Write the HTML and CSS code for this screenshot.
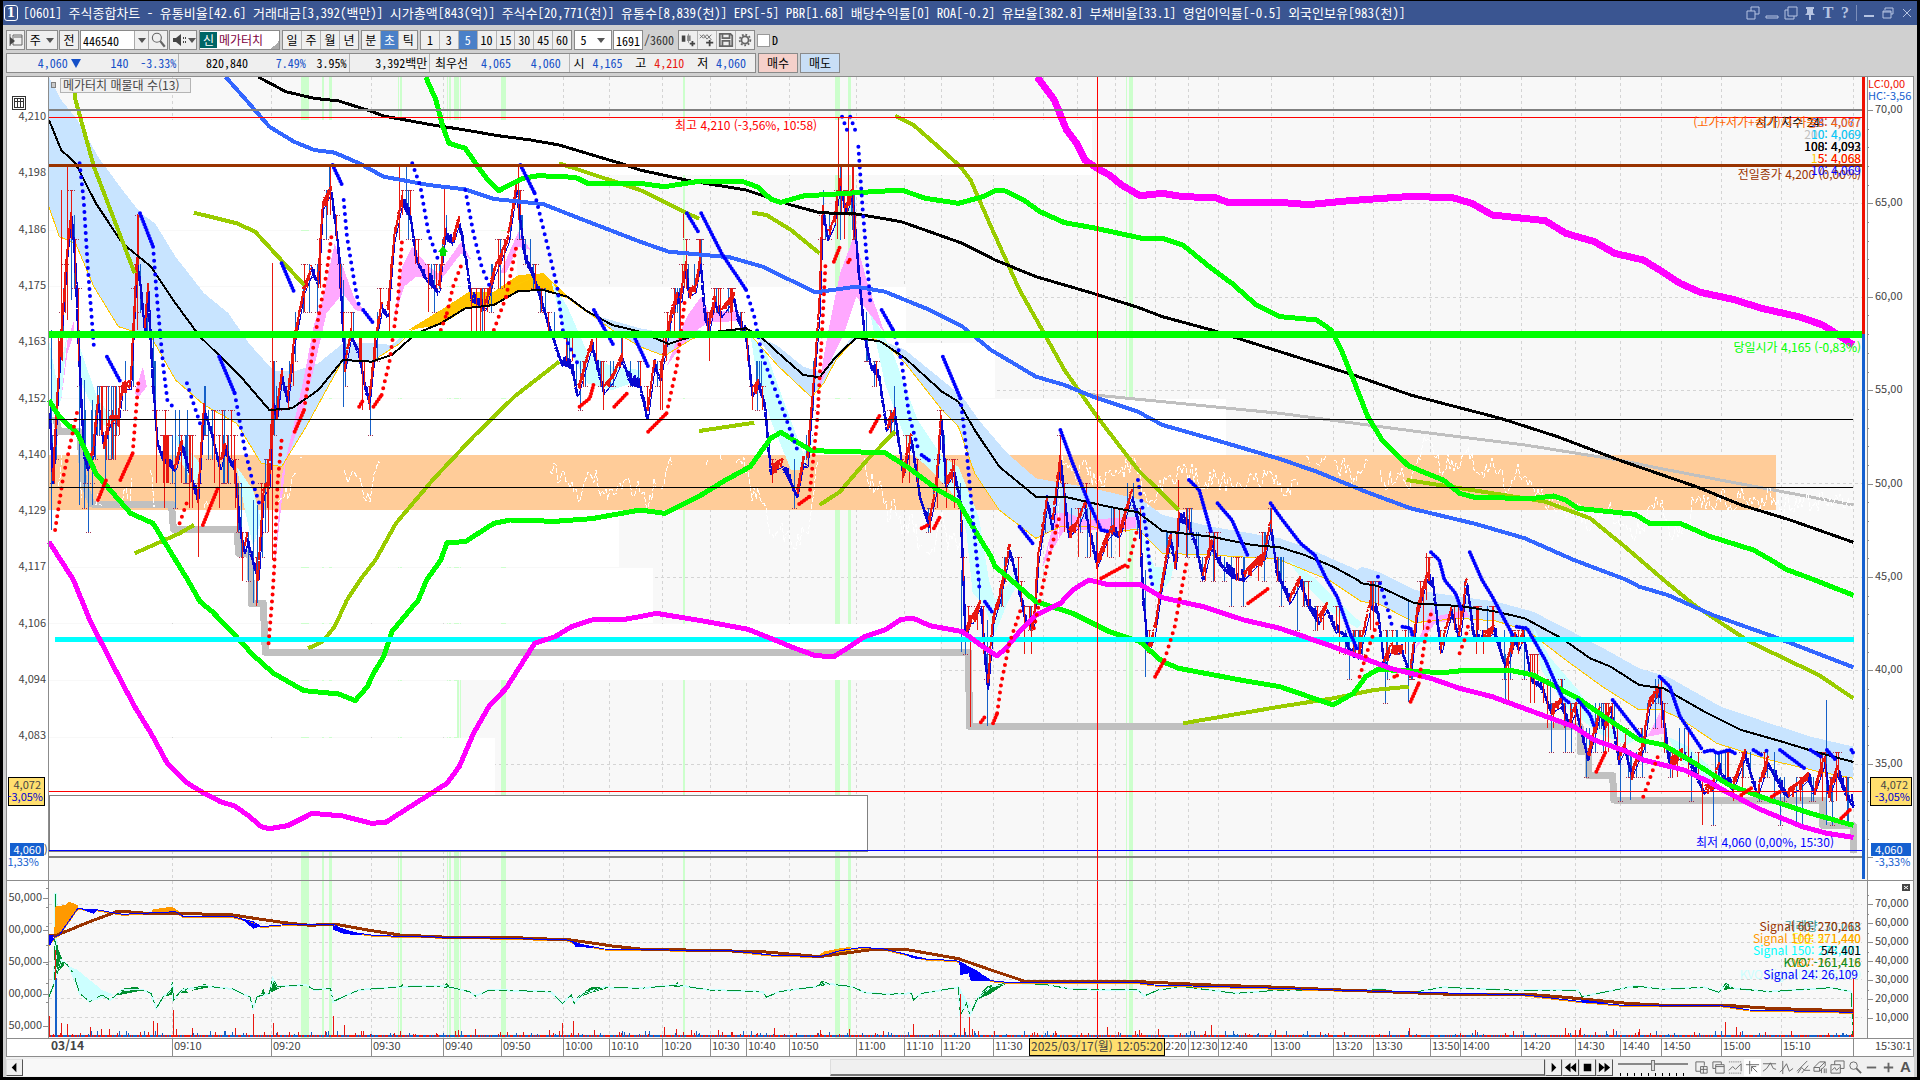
FILE: index.html
```html
<!DOCTYPE html>
<html lang="ko">
<head>
<meta charset="utf-8">
<title>[0601] 주식종합차트</title>
<link rel="stylesheet" href="styles.css">
</head>
<body>
<header class="titlebar">
  <span class="badge">1</span>
  <h1 class="title">[0601] 주식종합차트 - 유통비율[42.6] 거래대금[3,392(백만)] 시가총액[843(억)] 주식수[20,771(천)] 유통수[8,839(천)] EPS[-5] PBR[1.68] 배당수익률[0] ROA[-0.2] 유보율[382.8] 부채비율[33.1] 영업이익률[-0.5] 외국인보유[983(천)]</h1>
  <div class="winbtns">
    <button aria-label="복제"><svg viewBox="0 0 14 14"><path d="M5 5V1h8v7H9M1 5h8v8H1z"/></svg></button>
    <button aria-label="축소"><svg viewBox="0 0 14 14"><path d="M1 10h12v2H1z"/></svg></button>
    <button aria-label="분리"><svg viewBox="0 0 14 14"><path d="M4 1h9v9H4zM4 4H1v9h9v-3"/></svg></button>
    <button aria-label="고정"><svg viewBox="0 0 14 14"><path class="fill" d="M3 1h8v2h-1v4l2 2H2l2-2V3H3zM6 9h2v5H6z"/></svg></button>
    <button class="glyph" aria-label="글꼴">T</button>
    <button class="glyph" aria-label="도움말">?</button>
    <i class="sep"></i>
    <button aria-label="최소화"><svg viewBox="0 0 14 14"><path class="fill" d="M2 9h10v2H2z"/></svg></button>
    <button aria-label="이전 크기"><svg viewBox="0 0 14 14"><path d="M4 4V2h8v6h-2M2 5h8v7H2zM2 6h8"/></svg></button>
    <button aria-label="닫기"><svg viewBox="0 0 14 14"><path d="M3 3l8 8M11 3l-8 8"/></svg></button>
  </div>
</header>
<main class="window">
  <div class="toolbar">
    <button class="tb w19" aria-label="패널"><svg viewBox="0 0 16 16"><path class="ln" d="M2 2v12M5 3h9v10H5zM6 5h8"/><path class="dk" d="M2 5l5 4-5 4z"/></svg></button>
    <button class="tb combo w32">주<i class="dd"></i></button>
    <button class="tb w20">전</button>
    <div class="field w86"><input aria-label="종목코드" value="446540"><button class="ddb" aria-label="목록"><i class="dd"></i></button><button class="ddb wide" aria-label="검색"><svg viewBox="0 0 16 16"><circle class="ln" cx="7" cy="6" r="4"/><path class="ln b" d="M10 9l4 5"/></svg></button></div>
    <button class="tb combo w28" aria-label="소리"><svg viewBox="0 0 16 16"><path class="dk" d="M2 6h3l5-4v12L5 10H2zM12 5h1v2h-1zM12 9h1v2h-1zM14 5h1v2h-1zM14 9h1v2h-1z"/></svg><i class="dd"></i></button>
    <div class="stock"><b>신</b><span>메가터치</span></div>
    <div class="group w77"><button>일</button><button>주</button><button>월</button><button>년</button></div>
    <div class="group w58"><button>분</button><button class="on">초</button><button>틱</button></div>
    <div class="group w152"><button>1</button><button>3</button><button class="on">5</button><button>10</button><button>15</button><button>30</button><button>45</button><button>60</button></div>
    <button class="tb combo white w38">5<i class="dd"></i></button>
    <div class="field w30"><input aria-label="봉 수" value="1691"></div>
    <span class="total">/3600</span>
    <div class="group w77">
      <button aria-label="지표 추가"><svg viewBox="0 0 18 18"><path class="dk" d="M2 4h4v7H2zM4 2v11"/><path class="md" d="M8 4h4v6H8zM9 2h1v10H9z"/><path class="dk" d="M13 10h2v2h2v2h-2v2h-2v-2h-2v-2h2z"/></svg></button>
      <button aria-label="선 추가"><svg viewBox="0 0 18 18"><path class="ln" d="M1 7l4-4 4 5 5-5M1 3l4 4 4-4 5 6"/><path class="dk" d="M11 9h2v2h3v2h-3v3h-2v-3H8v-2h3z"/></svg></button>
      <button aria-label="저장"><svg viewBox="0 0 18 18"><path class="ln b" d="M2 2h12l2 2v12H2zM5 2v5h8V2M5 16v-6h8v6"/></svg></button>
      <button aria-label="설정"><svg viewBox="0 0 18 18"><circle class="ln gear" cx="9" cy="9" r="6"/><circle class="ln b" cx="9" cy="9" r="4"/></svg></button>
    </div>
    <label class="check"><input type="checkbox">D</label>
  </div>
  <div class="quotes">
    <div class="quote">
      <span class="q c1 dn">4,060<i class="tri"></i></span><span class="q c2 dn">140</span><span class="q c3 dn">-3.33%</span>
      <i class="bar"></i><span class="q c4">820,840</span><span class="q c5 dn">7.49%</span><span class="q c6">3.95%</span>
      <i class="bar"></i><span class="q c7">3,392백만</span><i class="bar"></i>
      <span class="q c8">최우선</span><span class="q c9 dn">4,065</span><span class="q c10 dn">4,060</span>
      <i class="bar"></i><span class="q c11">시</span><span class="q c12 dn">4,165</span><span class="q c11">고</span><span class="q c12 up">4,210</span><span class="q c11">저</span><span class="q c12 dn">4,060</span>
    </div>
    <button class="order buy">매수</button><button class="order sell">매도</button>
  </div>
  <svg id="chart" class="chart" viewBox="6 76 1908 981" role="img" aria-label="메가터치 5초 차트"></svg>
  <footer class="scroll">
    <button class="sb" aria-label="왼쪽"><svg viewBox="0 0 16 16"><path d="M10 3v10L5 8z"/></svg></button>
    <div class="track"><div class="thumb"></div></div>
    <button class="sb" aria-label="재생"><svg viewBox="0 0 16 16"><path d="M6 3l5 5-5 5z"/></svg></button>
    <button class="sb" aria-label="뒤로"><svg viewBox="0 0 16 16"><path d="M8 3v10L2 8zM14 3v10L8 8z"/></svg></button>
    <button class="sb" aria-label="정지"><svg viewBox="0 0 16 16"><path d="M4 4h8v8H4z"/></svg></button>
    <button class="sb" aria-label="앞으로"><svg viewBox="0 0 16 16"><path d="M2 3l6 5-6 5zM8 3l6 5-6 5z"/></svg></button>
    <input class="speed" type="range" aria-label="속도" min="0" max="10" value="5">
    <div class="tools">
      <button aria-label="추가"><svg viewBox="0 0 16 16"><path d="M7 12H2V2h9v4M7 7h7v7H7zM10 7v7M7 10h7"/></svg></button>
      <button aria-label="겹치기"><svg viewBox="0 0 16 16"><path d="M5 9H2V2h9v3M5 5h9v9H5zM5 7h9"/></svg></button>
      <button aria-label="영역"><svg viewBox="0 0 16 16"><path stroke-dasharray="1 1" d="M1 2h14M1 14h14"/><path d="M1 11l4-4 3 3 6-6M14 4v8"/></svg></button>
      <button class="on" aria-label="십자선"><svg viewBox="0 0 16 16"><path d="M5 1v14M1 5h14M7 7l6 6M7 7v5M7 7h5"/></svg></button>
      <button aria-label="추세선"><svg viewBox="0 0 16 16"><path d="M1 4h14M1 12l4-3 4-6 3 6 3 1"/></svg></button>
      <button aria-label="수직선"><svg viewBox="0 0 16 16"><path d="M4 1v14M1 13l3-3 4-6 3 8 4-3"/></svg></button>
      <button aria-label="평행선"><svg viewBox="0 0 16 16"><path d="M1 12L12 1M2 14l4-6 3 3 6 0M6 14L13 6"/></svg></button>
      <button aria-label="지우개"><svg viewBox="0 0 16 16"><path d="M1 8l6-6h6L7 8zM1 8v4h6V8M7 12l6-6V2M9 14V9M12 14v-5M14 14V9"/></svg></button>
      <button aria-label="그림"><svg viewBox="0 0 16 16"><path d="M5 5V1h10v8h-4M1 5h10v9H1zM2 11l3-3 2 3 3-3"/></svg></button>
      <button aria-label="돋보기"><svg viewBox="0 0 16 16"><circle cx="7" cy="6" r="4"/><path class="b" d="M10 9l5 5"/></svg></button>
      <button aria-label="축소"><svg viewBox="0 0 16 16"><path class="b" d="M3 8h10"/></svg></button>
      <button aria-label="확대"><svg viewBox="0 0 16 16"><path class="b" d="M3 8h10M8 3v10"/></svg></button>
      <button class="auto">A</button>
    </div>
  </footer>
</main>
<script src="chart.js"></script>
</body>
</html>
```
FILE: styles.css
```css
* { box-sizing: border-box; }
body { margin: 0; padding: 1px 3px 3px; background: #000; font: 12px/16px "Noto Sans Mono CJK KR", "Noto Sans CJK KR", sans-serif; color: #000; }
button, input { font: inherit; color: inherit; margin: 0; padding: 0; border: 0; border-radius: 0; background: none; }
button { display: flex; align-items: center; justify-content: center; }
.titlebar { display: flex; align-items: center; height: 24px; padding: 0 3px 0 1px; background: #3a5591; color: #fff; }
.badge { width: 14px; height: 16px; border: 1px solid #fff; border-radius: 3px; font: bold 12px/14px "DejaVu Serif", serif; text-align: center; }
.title { flex: 1; margin: 0 0 0 5px; font-size: 13px; font-weight: 400; line-height: 18px; white-space: nowrap; overflow: hidden; }
.winbtns { display: flex; gap: 5px; align-items: center; color: #b6c4e2; }
.winbtns button { width: 14px; height: 14px; }
.winbtns svg { width: 14px; height: 14px; fill: none; stroke: #b6c4e2; }
.winbtns .fill { fill: #b6c4e2; stroke: none; }
.winbtns .glyph { width: 12px; font: bold 16px/14px "Liberation Serif", serif; }
.sep { width: 1px; height: 16px; background: #7d8fba; }
.window { background: #d0d0d0; padding: 5px 3px 0; }
.toolbar { display: flex; gap: 1px; height: 20px; align-items: center; }
.tb, .group, .field, .stock { height: 20px; border: 1px solid #8a8a8a; background: #efefef; display: flex; align-items: center; }
.tb svg, .group svg { width: 16px; height: 16px; }
.ln { fill: none; stroke: #666; }
.b { stroke-width: 2; }
.gear { stroke-width: 2; stroke-dasharray: 2 2; }
.dk { fill: #444; }
.md { fill: #888; }
.w19 { width: 19px; } .w20 { width: 20px; } .w28 { width: 28px; } .w30 { width: 30px; } .w32 { width: 32px; } .w38 { width: 38px; }
.w58 { width: 57px; } .w77 { width: 77px; } .w86 { width: 88px; } .w152 { width: 152px; }
.combo { justify-content: space-around; }
.white, .field, .stock { background: #fff; }
.dd { border: 4px solid transparent; border-top: 5px solid #555; border-bottom: 0; }
.field input { flex: 1; width: 10px; height: 18px; padding: 0 2px; }
.ddb { width: 14px; height: 18px; border-left: 1px solid #aaa; background: #efefef; }
.wide { width: 19px; }
.stock { width: 81px; margin: 0 1px; color: #800040; background: linear-gradient(135deg, transparent 50%, #aaa 50%) 100% 100%/8px 8px no-repeat #fff; }
.stock b { width: 17px; height: 16px; margin-right: 2px; background: #006666; color: #fff; font-weight: 400; text-align: center; }
.group { margin-right: 1px; }
.group button { flex: 1; height: 18px; border-left: 1px solid #b4b4b4; }
.group button:first-child { border-left: 0; }
.group .on { background: #4a80c8; color: #fff; }
.total { width: 33px; color: #333; }
.check { display: flex; align-items: center; gap: 2px; }
.check input { appearance: none; width: 13px; height: 13px; border: 1px solid #999; background: #fff; }
.quotes { display: flex; gap: 2px; margin-top: 3px; height: 20px; }
.quote { display: flex; align-items: center; width: 750px; border: 1px solid #8a8a8a; background: #efefef; }
.q { text-align: right; white-space: nowrap; }
.c1 { width: 74px; } .c2 { width: 48px; } .c3 { width: 48px; margin-right: 2px; }
.c4 { width: 69px; } .c5 { width: 58px; } .c6 { width: 41px; margin-right: 2px; }
.c7 { width: 78px; margin-right: 2px; } .c8 { width: 38px; } .c9 { width: 43px; } .c10 { width: 50px; margin-right: 8px; }
.c11 { width: 15px; } .c12 { width: 38px; margin-right: 9px; }
.dn { color: #1550c8; } .up { color: #e81810; }
.tri { display: inline-block; margin-left: 3px; border: 5px solid transparent; border-top: 9px solid #1550c8; border-bottom: 0; }
.bar { width: 1px; height: 18px; background: #b4b4b4; }
.order { width: 40px; border: 1px solid #8a8a8a; }
.buy { background: #f5d0ca; } .sell { background: #c8def5; }
.chart { display: block; width: 100%; height: auto; margin-top: 3px; }
.chart text { font: 12px "Noto Sans CJK KR", sans-serif; fill: #444; white-space: pre; }
.chart .axis { font-size: 11px; }
.scroll { display: flex; align-items: center; height: 20px; background: #f0f0f0; }
.sb { width: 17px; height: 17px; border: 1px solid #ddd; border-right-color: #555; border-bottom-color: #555; background: #f0f0f0; }
.sb svg { width: 15px; height: 15px; }
.track { flex: 1; display: flex; height: 17px; background: #f8f8f8; }
.thumb { width: 47%; margin-left: auto; border: 1px solid #ddd; border-right-color: #555; border-bottom: 2px solid #777; background: #f0f0f0; }
.speed { appearance: none; width: 70px; height: 17px; margin: 0 5px; background: linear-gradient(#888, #888) 0 4px/100% 2px no-repeat, repeating-linear-gradient(90deg, #000 0 1px, transparent 1px 7px) 2px 14px/100% 3px no-repeat; }
.speed::-webkit-slider-thumb { appearance: none; width: 4px; height: 11px; margin-top: -4px; border: 1px solid #777; background: #ddd; }
.tools { display: flex; }
.tools button { width: 17px; height: 17px; }
.tools svg { width: 15px; height: 15px; fill: none; stroke: #666; }
.tools .on { background: #fff; }
.tools .auto { font: bold 15px/16px "Liberation Sans", sans-serif; color: #555; }
```
FILE: chart.js
```js
const svg = document.getElementById('chart');
const NS = 'http://www.w3.org/2000/svg';
function el(name, attrs, text) {
  const e = document.createElementNS(NS, name);
  for (const k in attrs) e.setAttribute(k, attrs[k]);
  if (text !== undefined) e.textContent = text;
  svg.appendChild(e);
  return e;
}
const rect = (x, y, w, h, fill, more) => el('rect', Object.assign({ x, y, width: w, height: h, fill, 'shape-rendering': 'crispEdges' }, more));
const line = (x1, y1, x2, y2, stroke, w = 1, more) => el('line', Object.assign({ x1, y1, x2, y2, stroke, 'stroke-width': w, 'shape-rendering': 'crispEdges' }, more));
const text = (x, y, s, fill, anchor = 'start', cls = 'caption') => el('text', { x, y, class: cls, style: 'fill:' + fill, 'text-anchor': anchor }, s);
const axis = (x, y, s, fill, anchor) => text(x, y, s, fill, anchor, 'axis');

/* Series are stored on a fine grid, in tiles: A-C across the upper half, D-F across the lower. */
const TILE = { A: [0, 100], B: [640, 100], C: [1280, 100], D: [0, 560], E: [640, 560], F: [1280, 560] };
function pts(src) {
  let o = TILE.A; const out = [], n = src.trim().split(/[\s,]+/);
  for (let i = 0; i < n.length;) {
    if (TILE[n[i]]) { o = TILE[n[i++]]; continue; }
    out.push([o[0] + n[i] * 20 / 49, o[1] + n[i + 1] / 3]); i += 2;
  }
  return out;
}
const poly = (src, stroke, w, more) => el('polyline', Object.assign({ points: pts(src).join(' '), fill: 'none', stroke, 'stroke-width': w, 'stroke-linejoin': 'round', 'shape-rendering': 'crispEdges' }, more));
const area = (src, fill) => el('polygon', { points: pts(src).join(' '), fill, 'shape-rendering': 'crispEdges' });
let seed = 7;
const rnd = () => (seed = (seed * 16807) % 2147483647) / 2147483647;

rect(6, 76, 1908, 981, '#fff');
rect(49, 77, 1818, 961, '#f8f8f8');

const grid = [172, 271, 371, 443, 501, 563, 609, 662, 710, 746, 789, 856, 904, 941, 993, 1043, 1077, 1115, 1155, 1188, 1218, 1271, 1333, 1373, 1430, 1460, 1521, 1575, 1620, 1661, 1721, 1781, 1853];
grid.forEach(x => line(x + .5, 77, x + .5, 1038, '#d4d4d4', 1, { 'stroke-dasharray': '3 3' }));
[110, 203, 297, 390, 483, 577, 670, 764, 857, 904, 923, 942, 961, 979, 998, 1017].forEach(y => line(49, y + .5, 1862, y + .5, '#d4d4d4', 1, { 'stroke-dasharray': '3 3' }));
[[301, 8], [322, 2], [329, 3], [398, 1], [400, 2], [447, 1], [449, 2], [454, 5], [460, 1], [501, 5], [683, 2], [835, 5], [848, 3], [1126, 1], [1129, 4]].forEach(([x, w]) => rect(x, 77, w, 961, '#ccffcc'));

/* volume profile */
[[120, 55, 1092], [175, 55, 580], [231, 55, 517], [287, 56, 906], [343, 55, 995], [399, 56, 1226], [510, 57, 619], [568, 55, 653], [624, 56, 940], [681, 56, 457], [738, 57, 495], [796, 56, 868]].forEach(([y, h, x]) => rect(49, y, x - 49, h, '#fff'));
rect(49, 455, 1727, 55, '#ffcc99');
rect(49.5, 795.5, 818, 56, 'none', { stroke: '#808080' });

/* clouds */
area('A 120 -68 150 0 190 60 240 170 300 270 345 340 380 370 430 470 500 580 560 640 610 730 670 812 720 815 780 790 840 730 900 728 960 735 1000 690 980 730 910 785 840 785 750 980 690 1100 640 1090 580 970 500 915 430 840 370 710 290 680 230 560 185 430 145 410 120 320', '#c8e4ff');
area('A 1440 640 1568 685 B 70 700 150 690 130 715 60 768 0 740 A 1500 690', '#c8e4ff');
area('B 280 700 340 740 400 800 440 815 530 700 590 720 650 750 740 840 790 890 830 960 900 1060 970 1135 1110 1165 1230 1200 1280 1245 1400 1280 1568 1315 C 60 1340 190 1410 F 200 20 240 35 330 90 440 110 530 125 620 155 700 205 800 270 880 325 950 350 1080 440 1200 490 1300 530 1405 560 1405 655 1320 635 1200 600 1070 550 980 475 930 447 880 450 790 380 700 300 610 215 530 183 440 175 330 188 240 130 200 125 120 60 0 0 B 1568 1378 1400 1365 1280 1360 1220 1287 1150 1298 1110 1280 1030 1280 970 1315 880 1230 820 1120 780 980 740 930 650 790 600 730 540 700 480 780 450 850 420 892 340 800', '#c8e4ff');
area('A 1000 690 1080 630 1150 575 1210 575 1270 525 1330 520 1400 600 1440 640 1390 595 1330 572 1270 575 1210 615 1140 628 1080 675', '#ffc400');
['A 195 740 240 900 290 970 270 990 240 960 200 850', 'A 580 1100 620 1170 640 1260 620 1340 600 1230', 'A 120 720 140 850 165 700 150 900 130 950', 'A 430 1000 490 1090 480 1160 440 1080', 'A 1350 540 1390 620 1440 760 1500 800 1568 810 1568 840 1500 870 1440 850 1390 740', 'B 270 700 310 760 360 930 400 1060 430 1000 400 1110 370 1110 320 960 280 780', 'B 560 620 620 760 680 960 740 1070 780 1100 830 1250 855 1440 E 870 120 910 60 925 0 930 60 900 130 870 220 840 130 815 100 B 800 1300 780 1200 720 1120 660 1050 600 850', 'B 1220 1260 1260 1400 E 1290 20 1310 0 1300 60 1270 110 1250 60', 'F 20 0 80 50 130 110 200 190 190 205 130 160 60 70', 'F 620 200 660 290 730 390 780 480 830 510 870 540 850 555 780 520 700 440 640 330', 'F 950 530 1000 560 1060 630 1100 670 1060 670 980 600'].forEach(s => area(s, '#ccffff'));
['A 670 1440 690 1130 715 1000 745 830 770 670 790 600 820 430 840 500 870 600 900 640 870 630 840 580 800 640 770 800 740 950 700 1090', 'A 150 900 165 720 182 660 182 700 165 760', 'A 330 880 350 800 360 860 340 890', 'A 960 700 985 500 1010 440 1050 500 1075 520 1130 425 1155 480 1130 460 1080 540 1020 530 990 560 965 660', 'A 1225 520 1270 395 1300 450 1270 440 1240 520', 'B 65 800 100 690 120 640 150 590 170 640 230 630 250 660 215 665 170 665 140 690 100 740', 'B 435 880 460 700 490 520 525 405 560 560 600 700 530 590 500 700 460 800', 'B 985 1400 1020 1240 1050 1240 1090 1260 1215 1250 1215 1285 1090 1290 1040 1290', 'F 330 270 372 140 380 170 455 150 465 170 380 190', 'F 900 530 930 460 945 520'].forEach(s => area(s, '#ffa8ff'));
poly('A 120 320 145 410 185 430 230 560 290 680 370 710 430 840 500 915 580 970 640 1090 690 1100 750 980 840 780 910 785 980 730 1010 690 1330 520 1400 600 1500 690 B 0 740 60 768 130 715 260 690 340 800 420 892 450 850 480 780 540 700 600 730 650 790 740 930 780 980 820 1120 880 1230 970 1315 1030 1280 1110 1280 1150 1298 1220 1287 1280 1360 1400 1365 1568 1378 F 0 0 120 60 200 125 240 130 330 188 440 175 530 183 610 215 700 300 790 380 880 450 930 447 980 475 1070 550 1200 600 1320 635 1405 655', '#ffc800', 1);

/* lower support steps */
poly('A 135 950 145 995 195 995 205 1150 225 1212 420 1212 425 1288 580 1288 585 1360 612 1360 615 1440 D 615 130 645 130 650 277 E 805 277 807 499 F 735 499 735 575 755 575 755 647 815 647 818 720 1330 720 1330 797 1405 797 1405 880', '#c0c0c0', 7);
poly('B 1090 882 1568 940 C 320 992 600 1035 830 1080 930 1105 1100 1145 1405 1215', '#c0c0c0', 3);

/* price */
const price = pts('A 120 900 130 1140 140 900 150 700 165 450 175 340 185 500 195 800 205 1050 215 1100 228 1060 240 900 255 1030 270 960 290 960 300 860 320 860 335 480 345 560 355 700 362 550 375 850 385 1020 400 1070 430 1100 445 1030 460 1090 485 1190 500 920 520 1000 540 1100 550 1040 575 1100 590 1300 600 1350 605 1310 625 1400 633 1430 645 1180 660 1150 668 900 678 950 690 820 705 900 720 730 745 570 765 510 780 540 790 320 812 270 830 450 845 800 860 700 880 750 890 830 905 900 920 720 935 620 950 640 965 420 985 300 1005 340 1020 470 1040 520 1075 570 1090 400 1110 420 1125 360 1145 500 1155 590 1170 600 1190 620 1210 520 1225 480 1245 420 1265 260 1285 460 1310 530 1340 650 1375 780 1400 790 1415 880 1450 730 1480 870 1500 840 1525 770 1545 840 B 0 850 18 950 35 790 50 830 75 650 90 590 100 600 112 490 120 580 135 570 148 480 160 650 170 680 182 600 200 640 230 590 240 650 260 700 275 880 290 850 305 900 320 1110 350 1090 385 1180 400 1080 410 1090 425 850 440 620 447 320 460 410 475 370 490 250 505 330 520 280 535 500 550 700 565 790 585 820 605 980 625 940 645 1120 665 1010 685 1180 708 1270 725 1170 738 950 750 1150 770 1110 785 1200 E 797 230 808 180 815 180 835 130 852 380 865 180 880 120 900 0 B 905 1340 925 1440 E 945 180 965 190 975 0 B 985 1300 998 1200 1010 1280 1030 1070 1050 1300 1070 1280 1090 1220 1120 1390 1145 1310 1160 1290 1175 1300 1205 1180 1225 1280 E 1232 100 1245 270 1260 220 1280 60 B 1300 1310 1312 1400 1320 1250 1340 1260 1360 1320 1380 1430 1400 1330 1420 1380 1450 1420 1480 1430 1510 1390 1530 1370 1545 1270 1560 1410 F 0 50 25 120 50 60 70 130 95 180 115 140 135 200 155 210 170 270 195 280 205 220 222 130 240 150 255 310 270 270 300 270 320 340 335 160 360 50 375 70 395 270 420 150 440 230 457 60 475 220 500 230 525 210 555 320 575 230 585 260 597 220 615 350 640 370 665 450 690 430 710 490 725 440 755 590 785 450 795 500 812 450 830 600 845 560 862 640 890 560 905 430 930 390 955 610 985 580 1000 590 1040 690 1060 680 1075 620 1110 680 1140 580 1170 700 1195 600 1230 680 1245 700 1270 680 1295 650 1310 690 1335 600 1345 700 1365 630 1385 690 1405 730');
const at = x => {
  for (let i = 1; i < price.length; i++) if (price[i][0] >= x) {
    const [a, b] = price[i - 1], [c, d] = price[i];
    return b + (d - b) * (x - a) / ((c - a) || 1);
  }
  return price[price.length - 1][1];
};
const TICK = 24.43;
let up = '', dn = '', wickU = '', wickD = '', marks = '', echo = '';
for (let x = 50; x < 1853; x++) {
  const y = at(x), n = at(x + 1), j = rnd() * 14 - 7;
  if (n <= y) up += `M${x} ${y + j}L${x + 1} ${n - 5}`; else dn += `M${x} ${y + j}L${x + 1} ${n + 5}`;
  const early = x < 275;
  if (rnd() < (early ? .42 : .24)) {
    const a = 117 + Math.floor((y - 5 - 117) / TICK) * TICK - (early && rnd() < .35 ? TICK : 0);
    const b = Math.min(a + TICK * (rnd() < .3 ? 2 : 1) + (early ? TICK : 0), early ? 650 : 850);
    if (rnd() < .5) { wickU += `M${x + .5} ${a}V${b}`; marks += `M${x - 3} ${Math.round(a) + .5}h7`; }
    else { wickD += `M${x + .5} ${a}V${b}`; marks += `M${x - 2} ${Math.round(b) + .5}h6`; }
  }
  if (x % 2 === 0) {
    const g = (y - 100) * 3;
    let e = x < 1060 ? 1000 + (g - 500) * .5 : x < 1300 ? 1065 + (g - 1070) * .25 : 1020 + (g - 1430) * (x > 1690 ? .3 : .5);
    e = 100 + (e + rnd() * 60 - 30) / 3;
    const lo = x < 600 ? 509 : 555;
    echo += (e > 455 || x > 1400) && e < lo ? (echo.endsWith('!') || !echo ? 'M' : 'L') + x + ' ' + e : '!';
  }
}
/* session extremes: x, high, low */
[[67, 165, 320], [61, 190, 360], [137, 214, 330], [272, 263, 560], [330, 165, 215], [399, 165, 240], [444, 189, 240], [518, 165, 220], [838, 117, 190], [848, 117, 200], [853, 165, 240], [683, 214, 238], [1178, 480, 520], [970, 640, 727], [1426, 553, 600]].forEach(([x, a, b]) => { wickU += `M${x + .5} ${a}V${b}`; });
[[51, 330, 530], [71, 190, 300], [79, 330, 505], [84, 380, 505], [92, 400, 505], [175, 410, 505], [253, 500, 603], [257, 505, 603], [406, 165, 215], [343, 280, 407], [840, 165, 240], [852, 167, 230], [961, 570, 652], [1145, 570, 677], [987, 620, 726], [1408, 600, 702], [1826, 700, 825], [1630, 750, 800]].forEach(([x, a, b]) => { wickD += `M${x + .5} ${a}V${b}`; });
el('path', { d: echo.replace(/!+/g, '!').replace(/^L/, 'M').replace(/!L/g, 'M').replace(/!/g, ''), fill: 'none', stroke: '#fff', 'stroke-dasharray': '5 2', 'shape-rendering': 'crispEdges' });
const stroke = (d, c, w, dash) => el('path', { d, fill: 'none', stroke: c, 'stroke-width': w, 'shape-rendering': 'crispEdges', 'stroke-dasharray': dash || 'none' });
stroke(marks, '#a03050', 1, '1 1');
stroke(wickD, '#1560c8', 1);
el('polyline', { points: price.map(p => [p[0] + 1, p[1] + 3]).join(' '), fill: 'none', stroke: '#0808d0', 'shape-rendering': 'crispEdges' });
stroke(dn, '#0808d0', 2);
stroke(wickU, '#e81810', 1);
stroke(up, '#e81810', 2);

/* moving averages */
poly('A 120 60 150 150 185 190 235 310 300 430 370 500 430 610 490 710 590 830 660 930 715 925 780 870 840 780 910 785 960 765 1020 700 1080 670 1140 625 1210 615 1270 573 1330 570 1390 590 1440 635 1500 675 1568 695 B 70 732 150 700 260 685 300 715 340 760 400 825 440 832 480 770 530 713 590 725 650 775 740 875 780 905 820 990 880 1100 970 1190 1040 1190 1140 1218 1220 1237 1280 1293 1400 1310 1500 1335 1568 1342 C 60 1365 130 1400 190 1440 F 200 70 240 78 330 130 440 138 530 155 600 175 690 235 760 295 810 320 880 375 940 385 1040 455 1130 510 1230 545 1310 575 1405 606', '#000', 2);
['A 178 -60 185 0 230 200 330 520', 'A 475 338 580 370 625 395 745 555', 'A 330 1360 440 1300 475 1275', 'D 755 265 790 245 820 200 850 120 885 55 920 0 A 970 1270 1060 1140 1160 1010 1260 890 1370 785', 'A 1370 190 1568 270 B 145 357', 'B 275 338 310 345 370 390 440 460', 'B 145 993 280 968', 'B 440 1215 490 1175 560 1075 625 995', 'B 625 48 670 75 740 150 785 200 810 240 860 380 930 570 990 700 1040 810 1120 950 1220 1110 1320 1230', 'E 1330 490 1568 440 F 130 415 230 390 315 380', 'C 310 1140 470 1170 600 1195 650 1205 760 1255 840 1335 940 1440 F 1020 140 1150 245 1320 345 1405 415'].forEach(s => poly(s, '#99cc00', 4));
poly('A 633 -69 700 -25 770 -5 830 3 900 30 940 48 1060 75 1130 88 1220 107 1300 120 1370 135 1520 190 1568 210 B 120 242 260 270 370 315 440 338 530 342 640 365 790 430 870 480 970 530 1110 580 1220 622 1280 650 1400 690 1568 755 C 180 825 320 885 540 955 680 1010 830 1080 1020 1160 1130 1215 1250 1260 1405 1327', '#000', 3);
poly('A 553 -69 603 0 660 80 720 125 770 150 820 158 880 190 940 230 1050 255 1140 268 1210 297 1330 312 1430 360 1568 425 B 70 455 220 472 300 500 430 577 530 560 600 575 700 625 790 680 860 750 970 830 1040 855 1110 890 1220 935 1280 975 1410 1020 1568 1077 C 90 1115 210 1175 320 1225 480 1272 600 1315 720 1380 850 1440 F 880 80 950 105 1060 165 1210 230 1405 322', '#3366ff', 4);
poly('A 1043 -69 1068 0 1085 80 1100 130 1140 145 1165 190 1195 240 1222 272 1280 235 1320 227 1410 232 1440 250 1568 250 B 60 260 150 243 255 246 290 262 320 297 345 307 400 288 640 270 700 295 780 310 840 290 870 272 895 273 940 300 980 335 1040 368 1110 383 1230 415 1280 415 1330 435 1400 505 1450 550 1510 615 1568 650 C 90 660 125 690 150 750 180 840 215 950 250 1020 315 1098 400 1140 440 1180 480 1193 620 1195 670 1188 700 1200 730 1225 870 1243 905 1270 980 1270 1050 1308 1160 1350 1210 1385 1240 1408 1310 1440 F 1405 106', '#00ff00', 5);
poly('A 120 900 145 950 190 1000 235 1120 270 1170 320 1240 375 1270 460 1440 D 490 125 520 155 560 205 620 285 670 340 745 392 830 402 870 422 900 380 915 340 940 290 960 215 1025 120 1045 60 1080 0 A 1095 1328 1140 1325 1210 1270 1250 1260 1360 1264 1450 1256 1568 1230 B 60 1240 150 1185 210 1140 270 1100 320 1015 345 997 420 1052 600 1058 660 1105 730 1170 780 1205 820 1290 860 1370 E 870 20 900 50 970 125 1060 160 1150 215 1225 245 1280 305 1320 325 1480 362 1568 380 F 130 435 180 400 210 350 240 328 400 338 460 330 560 330 620 345 730 415 800 475 880 540 940 555 1010 605 1100 675 1200 720 1300 760 1405 796', '#00ff00', 5);
line(55, 639.5, 1854, 639.5, '#00ffff', 5);
poly('B 973 -69 1015 0 1045 90 1070 130 1090 180 1120 205 1150 225 1180 255 1225 287 1280 280 1330 290 1410 293 1440 307 1568 307 C 70 314 170 302 310 290 420 292 470 310 520 345 650 362 700 400 770 425 820 460 890 480 930 510 980 550 1030 577 1110 598 1180 625 1270 650 1330 675 1380 715 1405 735', '#ff00ff', 7);
poly('A 120 1325 180 1440 D 220 180 270 300 330 440 370 520 410 610 460 670 500 700 540 725 575 738 610 768 640 800 660 806 705 797 765 760 840 768 910 790 945 787 1050 705 1095 670 1125 620 1160 520 1200 435 1240 385 1310 250 1360 230 1400 200 1450 180 1530 178 1568 170 E 40 160 150 182 265 208 320 235 380 265 430 287 475 290 520 255 550 230 600 210 640 178 670 175 710 197 790 215 840 260 875 288 900 260 930 215 970 165 1030 130 1060 90 1100 60 1150 75 1225 73 1280 113 1380 140 1480 180 1568 205 F 130 260 270 325 370 355 440 385 520 410 620 455 720 500 770 540 850 575 890 600 990 630 1050 665 1100 700 1180 750 1280 800 1340 820 1405 832', '#ff00ff', 5);

/* parabolic stops */
const sar = (s, c) => s.split(';').forEach(p => {
  const q = pts(p), a = q[0], b = q[q.length - 1], steep = Math.abs(b[1] - a[1]) > 2.6 * Math.abs(b[0] - a[0]);
  poly(p, c, 4, { 'stroke-linecap': 'round', 'stroke-dasharray': steep ? '0 7' : '0 3', 'shape-rendering': 'auto' });
});
sar('A 195 190 205 300 215 500 230 740;A 262 770 295 845;A 343 340 375 440;A 375 440 385 600 400 800 410 900 430 930;A 458 850 490 970;A 537 770 575 880;A 575 880 600 1050 620 1150 635 1210;A 690 490 720 575;A 815 195 840 260;A 842 300 850 410 870 560 880 620;A 890 630 915 670;A 1010 190 1030 260 1050 400 1075 485;A 1140 270 1160 400 1180 500 1200 560;A 1275 195 1310 280;A 1310 280 1340 430 1365 560 1380 700 1415 790;A 1455 630 1505 740;A 1550 700 B 20 800;B 115 340 145 400;B 150 340 200 460 260 570;B 260 570 280 650 300 770;B 300 770 350 930 390 1065;B 495 50 507 90;B 515 50 530 100;B 535 140 545 320 560 540 565 620;B 592 630 620 690;B 620 690 640 780 660 950 680 1040;B 690 1065 712 1085;B 742 770 785 895;B 785 895 800 1050 815 1250 830 1440 E 832 95;E 845 125 865 160;B 930 1280 965 1335;B 1030 990 1060 1090 1100 1210 1130 1290 1150 1295;B 1220 1140 1240 1290 E 1252 60 1258 85;B 1345 1140 1370 1170 1400 1300;B 1415 1210 1450 1260 1490 1370;B 1545 1210 C 0 1250 50 1330 85 1365 115 1440 F 140 110 170 215 190 270;F 240 50 260 130 275 200;F 300 200 320 205 325 230;C 370 1357 390 1380 403 1440 F 430 100 445 150;C 465 1357 495 1440 F 520 110 570 225;F 580 200 605 205 650 300 690 410 710 430;F 730 420 760 465 770 500;F 815 420 885 530;F 930 350 955 380 980 470 1035 570;F 1040 575 1060 570 1070 580 1100 570 1115 580;F 1160 570 1180 585;F 1192 572 1198 572;F 1225 570 1285 625;F 1300 570 1325 590;F 1340 570 1360 598;F 1400 570 1405 580', '#0000ff');
sar('A 135 1290 155 1130 190 930;A 240 1200 260 1140;A 295 1140 325 1060;A 325 1060 340 830;A 440 1270 460 1200;A 497 1275 535 1160;D 658 250 668 100 A 672 1400 680 1150 690 1020;A 722 995 745 930;A 745 930 770 720 800 520 812 410;A 880 920 890 900;A 915 920 935 885;A 935 885 955 780 975 600 985 420;A 1080 690 1095 640;A 1095 640 1110 560 1135 480;A 1210 690 1240 590;A 1240 590 1265 440;A 1420 920 1445 895 1455 850;A 1505 920 1540 875;B 20 995 65 940;B 65 940 90 800 110 600;B 390 1212 415 1190;B 415 1190 435 950 450 600 455 480;B 475 485 490 440;B 565 995 590 940;B 690 1285 705 1275;B 720 1285 735 1250;B 510 487 516 475;E 835 487 845 470;E 865 490 875 460;E 875 460 885 370 905 250 935 140;E 965 205 1000 0 B 1030 1240;E 1130 55 1190 15;B 1195 1400 1218 1290;E 1262 350 1285 300;E 1285 300 1310 200 1340 0;E 1490 130 1540 85;F 195 350 215 270 238 190;F 320 425 340 370;F 340 370 355 240 372 150;F 440 280 455 230 462 190;F 280 350 290 345;F 775 635 800 570;F 890 710 930 575;F 1130 705 1160 680;F 1205 710 1225 695;F 1375 775 1400 745', '#ff0000');

/* price levels */
line(49, 110, 1862, 110, '#808080', 2);
line(49, 857, 1862, 857, '#808080', 2);
line(49, 117.5, 1862, 117.5, '#ff0000');
line(49, 165.5, 1862, 165.5, '#993300', 3);
line(49, 334.5, 1862, 334.5, '#00ff00', 7);
line(49, 419.5, 1853, 419.5, '#000');
line(49, 487.5, 1853, 487.5, '#000');
line(49, 791.5, 1862, 791.5, '#ff0000');
line(49, 850.5, 1862, 850.5, '#0000ff');
line(1097.5, 77, 1097.5, 1038, '#ff0000');
el('path', { d: 'M443 246l5 6h-2v4h-6v-4h-2z', fill: '#00e000' });

/* volume panel */
area('D 165 1215 190 1230 220 1260 250 1290 280 1305 220 1325 195 1300', '#ccffff');
area('E 782 1280 800 1320 812 1340 800 1340 786 1365', '#ccffff');
['D 136 1110 142 1165 158 1215 138 1240', 'E 818 1325 850 1278 900 1268 860 1300', 'D 1410 1315 1450 1280 1500 1280 1450 1298', 'D 280 1308 300 1286 335 1280 345 1292', 'D 403 1308 420 1290 422 1262 424 1305', 'D 440 1298 450 1282 460 1298', 'D 470 1292 500 1272 520 1280', 'D 638 1308 645 1285 650 1305', 'D 664 1298 667 1252 675 1275 690 1282', 'D 980 1284 985 1270 990 1284', 'D 1088 1283 1093 1268 1105 1283', 'E 435 1280 445 1262 470 1272', 'E 84 1280 92 1266 98 1280', 'F 850 1285 866 1276 880 1284', 'F 1088 1290 1092 1268 1112 1285'].forEach(s => area(s, '#009030'));
const kvo = pts('D 120 1310 133 1270 136 1000 138 1250 150 1200 165 1215 180 1240 195 1300 220 1325 250 1305 270 1320 300 1290 350 1290 370 1300 383 1345 400 1310 420 1290 422 1265 425 1320 445 1290 500 1278 570 1287 600 1305 612 1310 620 1345 630 1310 660 1300 668 1255 680 1280 750 1275 770 1290 810 1285 816 1325 850 1305 880 1290 980 1280 1090 1278 1150 1295 1165 1308 1200 1290 1350 1295 1378 1330 1400 1305 1407 1330 1430 1300 1480 1282 1568 1285 E 90 1275 170 1290 300 1295 310 1312 340 1295 430 1280 450 1270 520 1280 550 1297 600 1303 665 1300 670 1320 690 1300 780 1282 785 1365 800 1330 808 1365 830 1310 860 1280 900 1268 1000 1275 1060 1288 1220 1290 1235 1308 1270 1290 1330 1280 1460 1300 1568 1290 F 120 1290 250 1288 310 1300 400 1282 560 1290 730 1290 740 1310 800 1295 870 1278 940 1288 1040 1282 1075 1297 1093 1270 1110 1285 1200 1295 1350 1283 1400 1295 1404 1430');
el('polyline', { points: kvo.join(' '), fill: 'none', stroke: '#ccffff', 'stroke-width': 2, 'shape-rendering': 'crispEdges' });
el('polyline', { points: kvo.join(' '), fill: 'none', stroke: '#009030', 'stroke-dasharray': '14 4 8 3 3 6', 'shape-rendering': 'crispEdges' });
area('D 133 1125 135 1040 160 1035 170 1025 190 1035 190 1050 150 1120', '#ff9900');
area('D 370 1060 375 1048 422 1040 440 1055', '#ff9900');
area('E 435 1190 450 1175 490 1165 520 1160 500 1180', '#ff9900');
const obv = 'D 120 1155 135 1130 145 1125 190 1046 240 1050 300 1063 430 1055 450 1070 570 1070 620 1085 640 1100 720 1092 820 1095 850 1115 920 1127 1100 1132 1250 1135 1390 1140 1410 1150 1480 1167 E 230 1173 320 1185 440 1190 490 1172 540 1163 590 1165 700 1197 775 1202 820 1230 860 1262 900 1267 1220 1268 1260 1275 1568 1285 F 130 1290 600 1305 740 1325 830 1335 1080 1337 1150 1350 1405 1357';
poly(obv, '#ff9900', 1, { transform: 'translate(0 1)' });
poly('D 120 1127 140 1125 220 1085 290 1053 360 1060 560 1063 640 1078 710 1090 760 1096 820 1092 900 1110 980 1125 1100 1132 1260 1133 1400 1140 1500 1158 1568 1167 E 300 1175 440 1190 560 1170 650 1168 780 1196 860 1230 940 1263 1080 1263 1220 1265 1400 1275 1568 1282 F 150 1290 400 1302 600 1302 700 1312 850 1330 960 1337 1080 1335 1200 1345 1405 1353', '#993300', 3);
['D 120 1125 132 1125 125 1155 120 1155', 'D 195 1045 240 1050 230 1062 215 1055', 'D 580 1072 640 1098 620 1106 600 1085', 'D 815 1095 890 1125 845 1123 815 1108', 'D 1400 1142 1460 1165 1410 1160', 'E 640 1180 710 1200 670 1195', 'E 782 1203 830 1235 860 1263 810 1262 805 1240 785 1245', 'F 735 1318 810 1330 740 1328'].forEach(s => area(s, '#0000ff'));
poly(obv, '#0000ff', 1);

let vr = '', vb = '';
for (let x = 50; x < 1853; x++) {
  const h = rnd() < .12 ? 3 + rnd() * 9 * rnd() : 2;
  if (rnd() < .5) vr += `M${x + .5} 1037v${-h}`; else vb += `M${x + .5} 1037v${-Math.min(h, 6)}`;
}
pts('D 120 1368 150 1390 165 1392 220 1400 375 1383 384 1388 425 1350 470 1405 575 1403 620 1362 668 1390 815 1368 842 1395 890 1412 1163 1407 1378 1390 1405 1383 E 87 1407 442 1410 513 1408 595 1412 670 1392 785 1302 793 1405 807 1370 1222 1410 F 315 1405 735 1403 815 1407 1090 1386 1404 1255').forEach(([x, y]) => { vr += `M${Math.round(x) + .5} 1037V${y}`; });
stroke(vb, '#1560c8', 1);
stroke(vr, '#e81810', 1);
rect(55, 978, 2, 59, '#1560c8');
line(55.5, 950, 55.5, 980, '#e81810');

/* frame, axes */
rect(1862, 77, 3, 257, '#f01000');
rect(1862, 334, 3, 545, '#1560d0');
rect(1867, 77, 46, 961, '#fff');
[[6, 76.5, 1914, 76.5], [6.5, 76, 6.5, 1057], [1913.5, 76, 1913.5, 1057], [48.5, 76, 48.5, 1056], [1867.5, 76, 1867.5, 1056], [6, 880.5, 1914, 880.5], [6, 1038.5, 1914, 1038.5], [6, 1056.5, 1914, 1056.5]].forEach(a => line(...a, '#8c8c8c'));
rect(7, 1039, 1906, 17, '#fff');
const G = '#444';
['4,210', '4,198', '4,186', '4,175', '4,163', '4,152', '4,140', '4,129', '4,117', '4,106', '4,094', '4,083'].forEach((t, i) => axis(46, 120 + Math.round(i * 56.3), t, G, 'end'));
['50,000', '00,000', '50,000', '00,000', '50,000'].forEach((t, i) => { axis(42, 901 + i * 32, t, G, 'end'); line(43, 898.5 + i * 32, 49, 898.5 + i * 32, '#8c8c8c'); });
['70,00', '65,00', '60,00', '55,00', '50,00', '45,00', '40,00', '35,00'].forEach((t, i) => axis(1875, 113 + Math.round(i * 93.4), t, G));
for (let i = 0; i <= 40; i++) { const y = Math.round(110 + i * 18.68) + .5; line(1867, y, i % 5 ? 1869 : 1873, y, '#8c8c8c'); }
['70,000', '60,000', '50,000', '40,000', '30,000', '20,000', '10,000'].forEach((t, i) => { axis(1875, 907 + i * 19, t, G); line(1867, 904.5 + i * 19, 1873, 904.5 + i * 19, '#8c8c8c'); line(1867, 895.5 + i * 19, 1869, 895.5 + i * 19, '#8c8c8c'); line(46, 888.5 + i * 19, 49, 888.5 + i * 19, '#8c8c8c'); });
axis(1868, 88, 'LC:0,00', '#f01000');
axis(1868, 100, 'HC:-3,56', '#1560d0');
[[49, '03/14'], [172, '09:10'], [271, '09:20'], [371, '09:30'], [443, '09:40'], [501, '09:50'], [563, '10:00'], [609, '10:10'], [662, '10:20'], [710, '10:30'], [746, '10:40'], [789, '10:50'], [856, '11:00'], [904, '11:10'], [941, '11:20'], [993, '11:30'], [1155, '2:20'], [1188, '12:30'], [1218, '12:40'], [1271, '13:00'], [1333, '13:20'], [1373, '13:30'], [1430, '13:50'], [1460, '14:00'], [1521, '14:20'], [1575, '14:30'], [1620, '14:40'], [1661, '14:50'], [1721, '15:00'], [1781, '15:10'], [1853, '']].forEach(([x, t], i) => {
  if (i) line(x + .5, 1038, x + .5, 1056, '#8c8c8c');
  const e = t === '2:20' ? axis(1165, 1050, t, G) : axis(x + 2, 1050, t, G);
  if (!i) { e.style.fontWeight = 'bold'; e.style.fontSize = '12px'; }
});
axis(1875, 1050, '15:30:1', G);
rect(1029.5, 1038.5, 135, 17, '#ffdf6e', { stroke: '#000' });
text(1031, 1051, '2025/03/17(월) 12:05:20', G);

/* price boxes */
[[8, 36], [1870, 41]].forEach(([x, w]) => {
  rect(x + .5, 777.5, w, 28, '#ffdf6e', { stroke: '#000' });
  axis(x + w - 3, 789, '4,072', G, 'end');
  axis(x + w - 1, 801, '-3,05%', '#0000d0', 'end');
});
rect(10, 843, 34, 13, '#1560d0'); axis(41, 854, '4,060', '#fff', 'end'); axis(44, 854, ')', G);
axis(39, 866, '1,33%', '#1560d0', 'end');
rect(1871, 843, 40, 13, '#1560d0'); axis(1875, 854, '4,060', '#fff');
axis(1875, 866, '-3,33%', '#1560d0');

/* captions */
rect(51.5, 82.5, 4, 5, '#c8c8c8', { stroke: '#808080' });
rect(60.5, 78.5, 130, 14, '#f0f0f0', { stroke: '#b4b4b4' });
text(63, 90, '메가터치 매물대 수(13)', G);
el('path', { d: 'M12.500 96.500h13v13h-13zM14.500 98.500h9v9h-9zM14.500 101.500h9M17.500 98.500v9M20.500 98.500v9', fill: '#fff', stroke: '#333', 'shape-rendering': 'crispEdges' });
rect(1902, 884, 8, 7, '#444'); el('path', { d: 'M1904 886l4 3M1908 886l-4 3', stroke: '#fff' });
text(675, 130, '최고 4,210 (-3,56%, 10:58)', '#ff0000');
text(1696, 847, '최저 4,060 (0,00%, 15:30)', '#0000ff');
text(1861, 179, '전일종가 4,200 (0,00%)', '#993300', 'end');
text(1861, 352, '당일시가 4,165 (-0,83%)', '#00ff00', 'end');
text(1861, 127, '24: 4,077', '#3366ff', 'end');
text(1820, 127, '저가 지수 24', '#000', 'end');
text(1861, 127, '(고가+저가+종가)/3 가중8: 4,067', '#ff6600', 'end');
text(1861, 139, '200: 4,069', '#c0c0c0', 'end');
text(1861, 139, '10: 4,069', '#00ccff', 'end');
text(1861, 151, '100: 4,093', '#000', 'end');
text(1861, 151, '108: 4,092', '#000', 'end');
text(1861, 163, '15: 4,068', '#ffcc00', 'end');
text(1861, 163, '5: 4,068', '#ff0000', 'end');
text(1861, 175, '10: 4,069', '#0000ff', 'end');
text(1861, 931, '거래량: 30,018', '#339999', 'end');
text(1861, 931, 'Signal 60: 270,263', '#993300', 'end');
text(1861, 943, '단순 5: 1,440', '#ffff00', 'end');
text(1861, 943, 'Signal 100: 271,440', '#ff9900', 'end');
text(1861, 955, 'Signal 150: 273,671', '#00ffff', 'end');
text(1861, 955, '54: 401', '#000', 'end');
text(1861, 967, 'OBV: 261,418', '#ff9900', 'end');
text(1861, 967, 'KVO: -161,416', '#009030', 'end');
text(1861, 979, 'KVO Signal 42: 26,009', '#ccffff', 'end');
text(1858, 979, 'Signal 24: 26,109', '#0000ff', 'end');
```
